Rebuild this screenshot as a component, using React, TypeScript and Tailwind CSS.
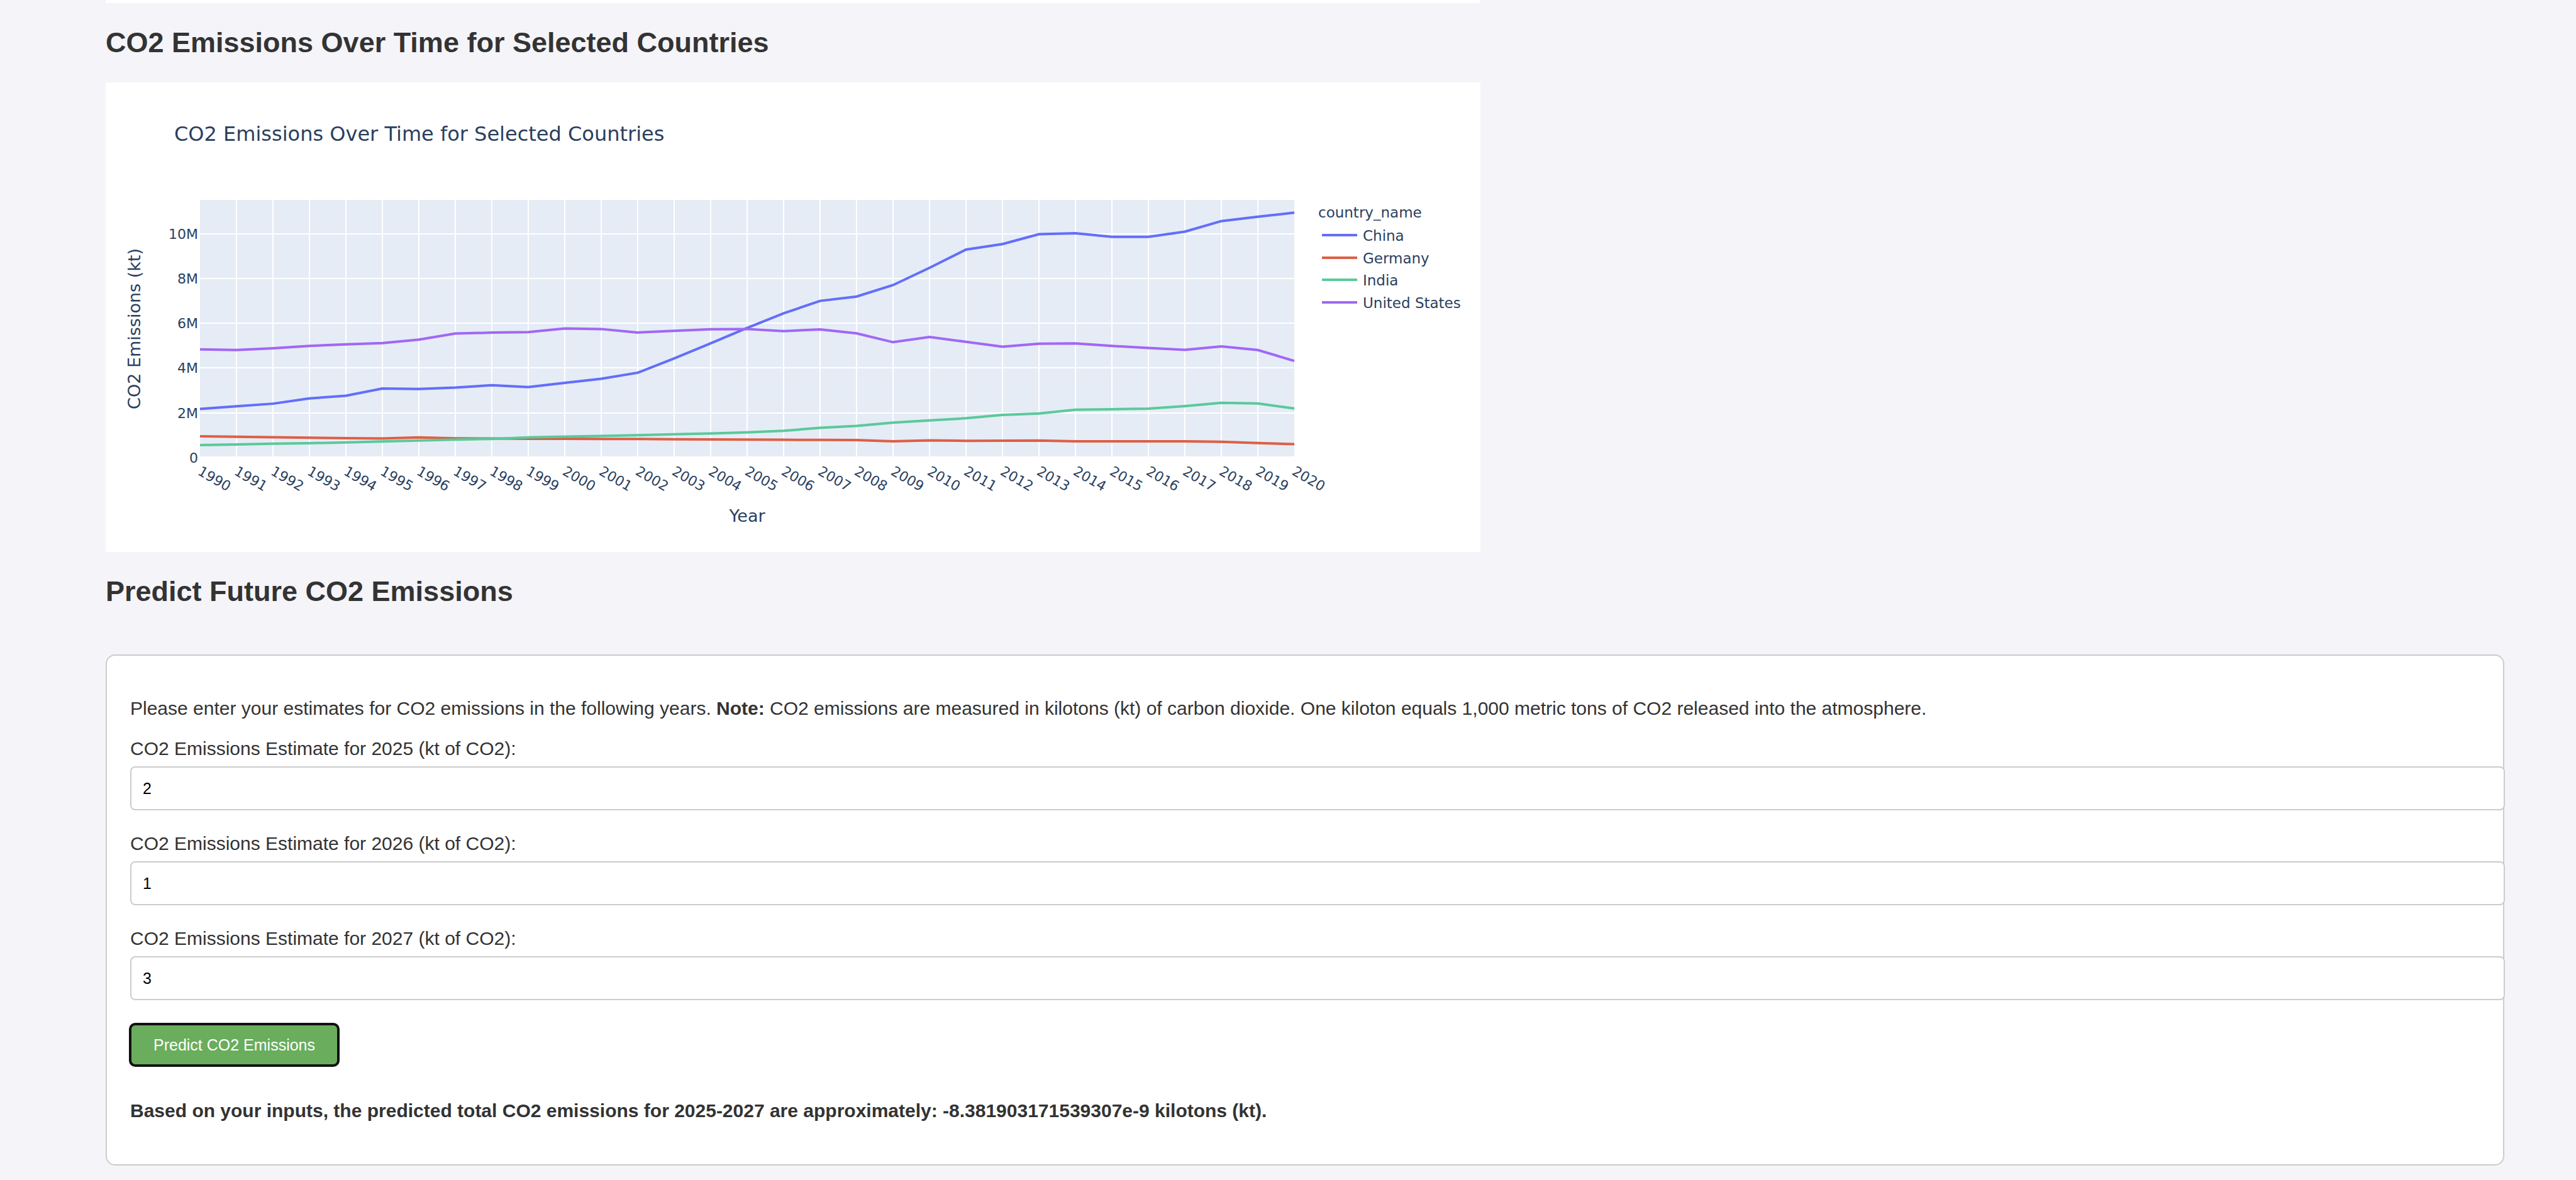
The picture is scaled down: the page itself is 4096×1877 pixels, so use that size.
import React, { useState } from "react";

type Series = { name: string; color: string; values: number[] };

const YEARS = Array.from({ length: 31 }, (_, i) => 1990 + i);

// Emissions in millions of kilotons, one value per year from 1990 to 2020.
const SERIES: Series[] = [
  {
    name: "China",
    color: "#636efa",
    values: [
      2.175, 2.293, 2.41, 2.645, 2.763, 3.085, 3.063, 3.127, 3.234, 3.149, 3.341, 3.523, 3.791, 4.432, 5.107, 5.791,
      6.444, 7.0, 7.193, 7.706, 8.476, 9.29, 9.536, 9.975, 10.018, 9.857, 9.857, 10.092, 10.563, 10.755, 10.937,
    ],
  },
  {
    name: "Germany",
    color: "#de5f46",
    values: [
      0.955, 0.934, 0.913, 0.891, 0.87, 0.859, 0.902, 0.864, 0.855, 0.843, 0.84, 0.838, 0.833, 0.824, 0.816, 0.806,
      0.8, 0.79, 0.784, 0.731, 0.773, 0.752, 0.757, 0.768, 0.731, 0.731, 0.731, 0.729, 0.709, 0.656, 0.602,
    ],
  },
  {
    name: "India",
    color: "#5bc99a",
    values: [
      0.56, 0.592, 0.624, 0.645, 0.683, 0.72, 0.763, 0.806, 0.838, 0.902, 0.939, 0.971, 1.004, 1.046, 1.084, 1.132,
      1.201, 1.33, 1.415, 1.565, 1.661, 1.758, 1.908, 1.972, 2.143, 2.164, 2.186, 2.303, 2.448, 2.421, 2.196,
    ],
  },
  {
    name: "United States",
    color: "#a167f5",
    values: [
      4.834, 4.807, 4.882, 4.989, 5.058, 5.112, 5.272, 5.54, 5.582, 5.604, 5.77, 5.743, 5.588, 5.663, 5.732, 5.743,
      5.647, 5.727, 5.551, 5.155, 5.39, 5.171, 4.954, 5.085, 5.101, 4.989, 4.898, 4.812, 4.967, 4.807, 4.32,
    ],
  },
];

const PLOT = { left: 150, right: 1890, top: 187, zero: 597, perMillion: 35.63 };

const xOf = (i: number) => PLOT.left + i * 58;
const yOf = (millions: number) => PLOT.zero - millions * PLOT.perMillion;

function EmissionsChart() {
  return (
    <svg
      viewBox="0 0 2186 747"
      role="img"
      aria-label="CO2 Emissions Over Time for Selected Countries"
      className="block h-auto w-[2186px] max-w-full bg-white font-['Verdana','DejaVu_Sans',sans-serif]"
      fill="#2a3f5f"
    >
      <text x={109} y={93} fontSize={32}>
        CO2 Emissions Over Time for Selected Countries
      </text>

      <rect x={PLOT.left} y={PLOT.top} width={PLOT.right - PLOT.left} height={408} fill="#e5ecf6" />
      <g stroke="#ffffff" strokeWidth={2}>
        {YEARS.slice(1, -1).map((year, i) => (
          <line key={year} x1={xOf(i + 1)} x2={xOf(i + 1)} y1={PLOT.top} y2={595} />
        ))}
        {[2, 4, 6, 8, 10].map((m) => (
          <line key={m} x1={PLOT.left} x2={PLOT.right} y1={Math.round(yOf(m))} y2={Math.round(yOf(m))} />
        ))}
      </g>

      <g fill="none" strokeWidth={4}>
        {SERIES.map((s) => (
          <polyline key={s.name} stroke={s.color} points={s.values.map((v, i) => `${xOf(i)},${yOf(v)}`).join(" ")} />
        ))}
      </g>

      <g fontSize={22} textAnchor="end">
        {[0, 2, 4, 6, 8, 10].map((m) => (
          <text key={m} x={147} y={Math.round(yOf(m)) + 8}>
            {m === 0 ? "0" : `${m}M`}
          </text>
        ))}
      </g>
      <g fontSize={22}>
        {YEARS.map((year, i) => (
          <text key={year} transform={`translate(${xOf(i) - 5} 623) rotate(30)`}>
            {year}
          </text>
        ))}
      </g>

      <text x={1020} y={699} fontSize={27} textAnchor="middle">
        Year
      </text>
      <text transform="translate(55 392) rotate(-90)" fontSize={27} textAnchor="middle">
        CO2 Emissions (kt)
      </text>

      <g fontSize={23}>
        <text x={1928} y={215}>
          country_name
        </text>
        {SERIES.map((s, i) => (
          <g key={s.name} transform={`translate(0 ${Math.round(243 + i * 35.5)})`}>
            <line x1={1934} x2={1990} y1={0} y2={0} stroke={s.color} strokeWidth={4} />
            <text x={1999} y={9}>
              {s.name}
            </text>
          </g>
        ))}
      </g>
    </svg>
  );
}

function Heading({ children }: { children: React.ReactNode }) {
  return <h2 className="my-[37px] text-[45px] leading-[52px] font-bold">{children}</h2>;
}

function EstimateField({ year, initial }: { year: number; initial: string }) {
  const [value, setValue] = useState(initial);
  const id = `estimate-${year}`;
  return (
    <div className="mb-9">
      <label htmlFor={id} className="block">
        CO2 Emissions Estimate for {year} (kt of CO2):
      </label>
      <input
        id={id}
        type="text"
        inputMode="decimal"
        value={value}
        onChange={(e) => setValue(e.target.value)}
        className="mt-[11px] box-content block h-7 w-full rounded-[8px] border-2 border-[#cccccc] bg-white px-[18px] py-[19px] text-[25px] leading-7 text-black"
      />
    </div>
  );
}

export default function App() {
  return (
    <main className="flow-root min-h-screen bg-[#f4f4f9] pr-[114px] pl-[168px] font-['Liberation_Sans',Arial,sans-serif] text-[30px] leading-[34px] text-[#333333]">
      <div className="h-[5px] w-[2186px] max-w-full bg-white" />
      <Heading>CO2 Emissions Over Time for Selected Countries</Heading>
      <EmissionsChart />
      <Heading>Predict Future CO2 Emissions</Heading>

      <form
        onSubmit={(e) => e.preventDefault()}
        className="mt-[74px] rounded-[15px] border-2 border-[#cccccc] bg-white px-[37px] pt-[67px] pb-[68px]"
      >
        <p className="mb-[30px]">
          Please enter your estimates for CO2 emissions in the following years. <strong>Note:</strong> CO2 emissions are
          measured in kilotons (kt) of carbon dioxide. One kiloton equals 1,000 metric tons of CO2 released into the
          atmosphere.
        </p>
        <EstimateField year={2025} initial="2" />
        <EstimateField year={2026} initial="1" />
        <EstimateField year={2027} initial="3" />
        <button
          type="submit"
          className="mt-[38px] block h-[66px] rounded-[8px] bg-[#69ad5d] px-[37px] text-[25px] leading-7 text-white outline-4 -outline-offset-2 outline-[#101010]"
        >
          Predict CO2 Emissions
        </button>
        <p className="mt-[55px] font-bold">
          Based on your inputs, the predicted total CO2 emissions for 2025-2027 are approximately:
          -8.381903171539307e-9 kilotons (kt).
        </p>
      </form>
    </main>
  );
}
